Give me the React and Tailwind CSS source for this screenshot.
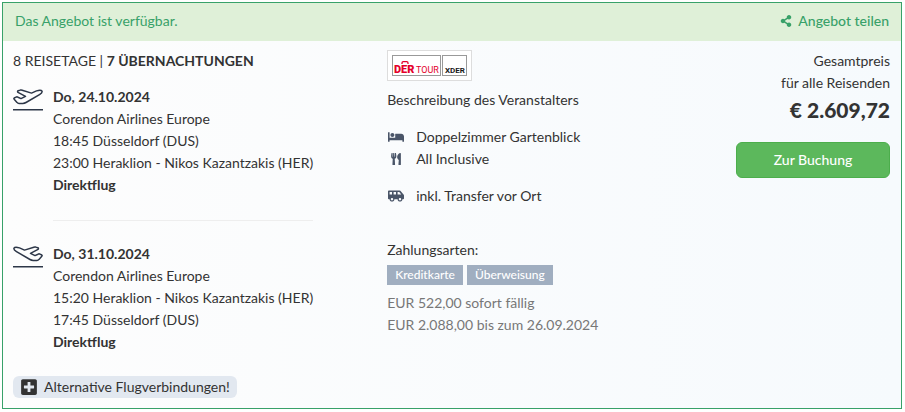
import React from "react";
import { FaBed, FaUtensils, FaShareAlt, FaPlusSquare, FaShuttleVan } from "react-icons/fa";

const outbound = {
    date: "Do, 24.10.2024",
    airline: "Corendon Airlines Europe",
    departure: "18:45 Düsseldorf (DUS)",
    arrival: "23:00 Heraklion - Nikos Kazantzakis (HER)",
    type: "Direktflug",
};

const inbound = {
    date: "Do, 31.10.2024",
    airline: "Corendon Airlines Europe",
    departure: "15:20 Heraklion - Nikos Kazantzakis (HER)",
    arrival: "17:45 Düsseldorf (DUS)",
    type: "Direktflug",
};

const PlaneIcon = ({ landing }) => (
    <svg width="30" height="22" viewBox="0 0 30 22" fill="none" stroke="#2d3748" strokeWidth="1.5" strokeLinejoin="round" strokeLinecap="round" aria-hidden="true">
        <g transform={landing ? "matrix(-1 0 0 1 30 0)" : undefined}>
            <path d="M1.2 9 L3 8.1 Q4 7.6 5 8.2 L8 9.6 L12.5 7.4 L5 3.4 Q4 2.4 5.2 1.7 L7.3 1.1 Q8.2 .9 9.2 1.2 L18.5 4.1 L23.5 1.9 Q28 .4 29 2.1 Q29.6 3.7 26.5 5.6 L13 13.5 Q11.5 14.4 9.8 14.4 H6 Q4.8 14.4 4 13.4 L1.2 10.3 Q.5 9.5 1.2 9 Z" />
        </g>
        <rect x="0" y="20" width="30" height="1.5" fill="#2d3748" stroke="none" />
    </svg>
);

const Flight = ({ flight, landing }) => (
    <div className="flex gap-2.5">
        <div className="shrink-0 pt-[3px]">
            <PlaneIcon landing={landing} />
        </div>
        <div>
            <p className="font-bold">{flight.date}</p>
            <p>{flight.airline}</p>
            <p>{flight.departure}</p>
            <p>{flight.arrival}</p>
            <p className="font-bold">{flight.type}</p>
        </div>
    </div>
);

const OperatorLogo = () => (
    <div className="w-fit border border-[#dddddd] bg-white p-1">
        <svg className="block font-[Roboto,sans-serif]" width="75" height="21" viewBox="0 0 75 21" role="img" aria-label="DERTOUR XDER">
            <rect x=".5" y=".5" width="48" height="20" fill="#fff" stroke="#999" />
            <rect x="50.5" y=".5" width="24" height="20" fill="#fff" stroke="#999" />
            <path d="M10 9 V8 Q10 6.7 11.3 6.7 H14.7 Q16 6.7 16 8 V9" fill="none" stroke="#e4002b" strokeWidth="1.3" />
            <text x="2" y="18" fontSize="11" fontWeight="900" fill="#e4002b">DER</text>
            <text x="24" y="18" fontSize="9" fontWeight="400" fill="#e4002b">TOUR</text>
            <text x="53" y="18" fontSize="8" fontWeight="700" fill="#1a1a1a">XDER</text>
        </svg>
    </div>
);

const Feature = ({ icon: Icon, size = 16, label }) => (
    <li className="flex items-center">
        <span className="flex w-[29px] shrink-0">
            <span className="flex w-[18px] justify-center">
                <Icon className="text-[#4a5568]" size={size} />
            </span>
        </span>
        {label}
    </li>
);

const App = () => {
    return (
        <div className="p-0.5 pr-[3px] font-['Lato','Noto_Sans',sans-serif] text-sm leading-[22px] text-[#333333]">
            <article className="border border-[#38a169] bg-linear-to-r from-[#fdfdfd] to-[#f6fafd]">
                <header className="flex items-center justify-between bg-[#dff0d8] px-3 pt-[7px] pb-[9px] text-[#38a169]">
                    <p>Das Angebot ist verfügbar.</p>
                    <button type="button" className="flex cursor-pointer items-center gap-1.5 font-medium">
                        <FaShareAlt size={12} />
                        Angebot teilen
                    </button>
                </header>

                <div className="grid grid-cols-12 pt-[9px] pb-2.5">
                    <section className="col-span-5 px-2.5">
                        <p>
                            8 REISETAGE | <strong className="font-bold">7 ÜBERNACHTUNGEN</strong>
                        </p>
                        <div className="mt-3.5 w-fit">
                            <Flight flight={outbound} />
                            <hr className="mt-6 mb-[22px] ml-10 border-[#eeeeee]" />
                            <Flight flight={inbound} landing />
                        </div>
                        <button type="button" className="mt-[23px] flex cursor-pointer items-center gap-1.5 rounded-md bg-[#e2e8f0] px-[7px]">
                            <FaPlusSquare size={18} />
                            Alternative Flugverbindungen!
                        </button>
                    </section>

                    <section className="col-span-4 px-2.5">
                        <OperatorLogo />
                        <p className="mt-2">Beschreibung des Veranstalters</p>
                        <ul className="mt-[15px]">
                            <Feature icon={FaBed} label="Doppelzimmer Gartenblick" />
                            <Feature icon={FaUtensils} size={12} label="All Inclusive" />
                        </ul>
                        <ul className="mt-[15px]">
                            <Feature icon={FaShuttleVan} label="inkl. Transfer vor Ort" />
                        </ul>
                        <p className="mt-8">Zahlungsarten:</p>
                        <div className="mt-1 flex gap-1 text-xs leading-5 font-medium text-white">
                            <span className="bg-[#a0aec0] px-2">Kreditkarte</span>
                            <span className="bg-[#a0aec0] px-2">Überweisung</span>
                        </div>
                        <div className="mt-[7px] text-[#777777]">
                            <p>EUR 522,00 sofort fällig</p>
                            <p>EUR 2.088,00 bis zum 26.09.2024</p>
                        </div>
                    </section>

                    <section className="col-span-3 flex flex-col items-end pr-[11px] text-right">
                        <p>
                            Gesamtpreis
                            <br />
                            für alle Reisenden
                        </p>
                        <p className="text-[21px] leading-8 font-black">€ 2.609,72</p>
                        <button type="button" className="mt-4 w-[154px] cursor-pointer rounded-md border border-[#4cae4c] bg-[#5cb85c] py-1.5 font-medium text-white">
                            Zur Buchung
                        </button>
                    </section>
                </div>
            </article>
        </div>
    );
};

export default App;
